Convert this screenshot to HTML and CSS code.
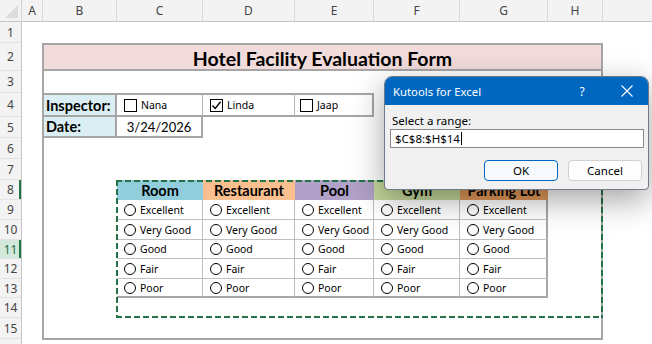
FILE: index.html
```html
<!DOCTYPE html>
<html lang="en">
<head>
  <meta charset="UTF-8" />
  <title>Hotel Facility Evaluation Form</title>
  <link rel="stylesheet" href="styles.css">
</head>
<body>
  <div class="app">
    <div class="colbar">
      <div class="corner"><span class="tri"></span></div>
      <div class="ch w-a">A</div>
      <div class="ch w-b">B</div>
      <div class="ch w-c">C</div>
      <div class="ch w-d">D</div>
      <div class="ch w-e">E</div>
      <div class="ch w-f">F</div>
      <div class="ch w-g">G</div>
      <div class="ch w-h">H</div>
      <div class="ch w-rest"></div>
    </div>

    <div class="main">
      <div class="rowbar">
        <div class="rh">1</div>
        <div class="rh">2</div>
        <div class="rh">3</div>
        <div class="rh">4</div>
        <div class="rh">5</div>
        <div class="rh">6</div>
        <div class="rh">7</div>
        <div class="rh mark">8</div>
        <div class="rh">9</div>
        <div class="rh">10</div>
        <div class="rh active">11</div>
        <div class="rh">12</div>
        <div class="rh">13</div>
        <div class="rh">14</div>
        <div class="rh">15</div>
        <div class="rh"></div>
      </div>

      <div class="sheet">
        <div class="frame"></div>
        <div class="title">Hotel Facility Evaluation Form</div>

        <div class="label insp-label">Inspector:</div>
        <div class="pick pick-c"><span class="box"></span>Nana</div>
        <div class="pick pick-d">
          <span class="box">
            <svg width="11" height="11" viewBox="0 0 11 11"><path d="M1.5 5.6 L4.2 8.4 L9.6 1.8" fill="none" stroke="#000" stroke-width="1.4"/></svg>
          </span>Linda
        </div>
        <div class="pick pick-e"><span class="box"></span>Jaap</div>

        <div class="label date-label">Date:</div>
        <div class="date-value">3/24/2026</div>

        <div class="rating">
          <div class="th room">Room</div>
          <div class="th restaurant">Restaurant</div>
          <div class="th pool">Pool</div>
          <div class="th gym">Gym</div>
          <div class="th parking">Parking Lot</div>

          <div class="td"><span class="radio"></span>Excellent</div>
          <div class="td"><span class="radio"></span>Excellent</div>
          <div class="td"><span class="radio"></span>Excellent</div>
          <div class="td"><span class="radio"></span>Excellent</div>
          <div class="td last"><span class="radio"></span>Excellent</div>

          <div class="td"><span class="radio"></span>Very Good</div>
          <div class="td"><span class="radio"></span>Very Good</div>
          <div class="td"><span class="radio"></span>Very Good</div>
          <div class="td"><span class="radio"></span>Very Good</div>
          <div class="td last"><span class="radio"></span>Very Good</div>

          <div class="td"><span class="radio"></span>Good</div>
          <div class="td"><span class="radio"></span>Good</div>
          <div class="td"><span class="radio"></span>Good</div>
          <div class="td"><span class="radio"></span>Good</div>
          <div class="td last"><span class="radio"></span>Good</div>

          <div class="td"><span class="radio"></span>Fair</div>
          <div class="td"><span class="radio"></span>Fair</div>
          <div class="td"><span class="radio"></span>Fair</div>
          <div class="td"><span class="radio"></span>Fair</div>
          <div class="td last"><span class="radio"></span>Fair</div>

          <div class="td bottom"><span class="radio"></span>Poor</div>
          <div class="td bottom"><span class="radio"></span>Poor</div>
          <div class="td bottom"><span class="radio"></span>Poor</div>
          <div class="td bottom"><span class="radio"></span>Poor</div>
          <div class="td bottom last"><span class="radio"></span>Poor</div>
        </div>

        <div class="selection"></div>
      </div>
    </div>

    <div class="dialog">
      <div class="dlg-title">
        <span class="dlg-name">Kutools for Excel</span>
        <span class="dlg-help">?</span>
        <span class="dlg-close">
          <svg width="12" height="12" viewBox="0 0 12 12"><path d="M0.5 0.5 L11.5 11.5 M11.5 0.5 L0.5 11.5" stroke="#fff" stroke-width="1.1"/></svg>
        </span>
      </div>
      <div class="dlg-body">
        <div class="dlg-label">Select a range:</div>
        <div class="dlg-input">$C$8:$H$14<span class="caret"></span></div>
        <div class="dlg-buttons">
          <button class="btn primary">OK</button>
          <button class="btn">Cancel</button>
        </div>
      </div>
    </div>
  </div>
</body>
</html>
```

FILE: styles.css
```css
body {
  margin: 0;
  background: #ffffff;
  font-family: 'Noto Sans', 'Open Sans', sans-serif;
  color: #000000;
}

.app {
  position: relative;
  width: 652px;
  height: 344px;
  overflow: hidden;
  background: #ffffff;
}

/* column letters */
.colbar {
  display: flex;
  height: 22px;
  background: #f3f3f3;
  border-bottom: 1px solid #c6c6c6;
  box-sizing: border-box;
}

.corner {
  width: 22px;
  position: relative;
  border-right: 1px solid #d4d4d4;
  box-sizing: border-box;
}

.tri {
  position: absolute;
  right: 3px;
  bottom: 3px;
  width: 0;
  height: 0;
  border-left: 13px solid transparent;
  border-bottom: 13px solid #dcdcdc;
}

.ch {
  box-sizing: border-box;
  border-right: 1px solid #d9d9d9;
  display: flex;
  justify-content: center;
  align-items: center;
  font-size: 12px;
  color: #444444;
}

.w-a { width: 21px; }
.w-b { width: 74px; }
.w-c { width: 86px; }
.w-d { width: 92px; }
.w-e { width: 79px; }
.w-f { width: 86px; }
.w-g { width: 88px; }
.w-h { width: 55px; }
.w-rest { flex: 1; border-right: none; }

.main {
  display: flex;
}

/* row numbers */
.rowbar {
  width: 22px;
  display: grid;
  grid-template-rows: 21px 28px 22px 24px 21px 21px 21px 20px 20px 20px 19px 20px 19px 20px 21px 20px;
  background: #f3f3f3;
  border-right: 1px solid #c6c6c6;
  box-sizing: border-box;
}

.rh {
  display: flex;
  align-items: center;
  justify-content: center;
  font-size: 12px;
  color: #444444;
  border-bottom: 1px solid #e2e2e2;
  box-sizing: border-box;
}

.rh.mark {
  box-shadow: inset -2px 0 0 #217346;
}

.rh.active {
  background: #d2e8da;
  color: #1d6b42;
  box-shadow: inset -2px 0 0 #217346;
}

/* worksheet body */
.sheet {
  flex: 1;
  display: grid;
  grid-template-columns: 21px 74px 86px 92px 79px 86px 88px 55px 1fr;
  grid-template-rows: 21px 28px 22px 24px 21px 21px 21px 20px 20px 20px 19px 20px 19px 20px 21px 20px;
}

.frame {
  grid-column: 2 / 9;
  grid-row: 2 / 16;
  border: 2px solid #a6a6a6;
  margin: 0 0 -1px -1px;
}

.title {
  grid-column: 2 / 9;
  grid-row: 2 / 3;
  margin-left: -1px;
  background: #f2dcdb;
  border: 2px solid #a6a6a6;
  display: flex;
  align-items: center;
  justify-content: center;
  font-family: Lato, 'Liberation Sans', sans-serif;
  font-weight: bold;
  font-size: 19.5px;
  padding-top: 2px;
}

.label {
  grid-column: 2 / 3;
  margin-left: -1px;
  background: #daeef3;
  border: 2px solid #a6a6a6;
  font-family: Lato, 'Liberation Sans', sans-serif;
  font-weight: bold;
  font-size: 14.5px;
  display: flex;
  align-items: flex-end;
  padding: 0 0 1px 2px;
}

.insp-label { grid-row: 4 / 5; }

.date-label {
  grid-row: 5 / 6;
  border-top: none;
}

.date-value {
  grid-column: 3 / 4;
  grid-row: 5 / 6;
  border: 2px solid #a6a6a6;
  border-top: none;
  border-left: none;
  font-family: Lato, 'Liberation Sans', sans-serif;
  font-size: 13px;
  display: flex;
  align-items: flex-end;
  justify-content: center;
  padding-bottom: 1px;
}

.pick {
  grid-row: 4 / 5;
  border-top: 2px solid #a6a6a6;
  border-bottom: 2px solid #a6a6a6;
  border-right: 1px solid #b4b4b4;
  display: flex;
  align-items: center;
  gap: 4px;
  padding-left: 6px;
  font-size: 10.5px;
}

.pick-c { grid-column: 3 / 4; padding-left: 7px; }
.pick-d { grid-column: 4 / 5; padding-left: 7px; }
.pick-e { grid-column: 5 / 6; padding-left: 5px; border-right: 2px solid #a6a6a6; }

.box {
  width: 13px;
  height: 13px;
  box-sizing: border-box;
  border: 1px solid #000000;
  display: flex;
  align-items: center;
  justify-content: center;
  background: #ffffff;
}

/* rating table */
.rating {
  grid-column: 3 / 8;
  grid-row: 8 / 14;
  display: grid;
  grid-template-columns: 86px 92px 79px 86px 88px;
  grid-template-rows: 20px 20px 20px 19px 20px 19px;
}

.th {
  display: flex;
  align-items: center;
  justify-content: center;
  font-family: Lato, 'Liberation Sans', sans-serif;
  font-weight: bold;
  font-size: 14.5px;
  padding-top: 1px;
}

.room { background: #92cddc; }
.restaurant { background: #fabf8f; }
.pool { background: #b1a0c7; }
.gym { background: #c4d79b; }
.parking { background: #e3995b; }

.td {
  display: flex;
  align-items: center;
  gap: 4px;
  padding-left: 7px;
  font-size: 10.5px;
  border-right: 1px solid #bfbfbf;
  border-bottom: 1px solid #bfbfbf;
}

.td.last { border-right: 2px solid #a6a6a6; }
.td.bottom { border-bottom: 2px solid #a6a6a6; }

.radio {
  width: 12px;
  height: 12px;
  box-sizing: border-box;
  border: 1px solid #000000;
  border-radius: 50%;
  background: #ffffff;
}

/* copy/select marquee */
.selection {
  grid-column: 3 / 9;
  grid-row: 8 / 15;
  margin-left: -1px;
  background:
    repeating-linear-gradient(90deg, #217346 0 6px, transparent 6px 9px) top / 100% 2px no-repeat,
    repeating-linear-gradient(90deg, #217346 0 6px, transparent 6px 9px) bottom / 100% 2px no-repeat,
    repeating-linear-gradient(180deg, #217346 0 6px, transparent 6px 9px) left / 2px 100% no-repeat,
    repeating-linear-gradient(180deg, #217346 0 6px, transparent 6px 9px) right / 2px 100% no-repeat;
}

/* kutools dialog */
.dialog {
  position: absolute;
  left: 384px;
  top: 76px;
  width: 265px;
  height: 114px;
  box-sizing: border-box;
  background: #f0f0f0;
  border: 1px solid #6f7b88;
  border-radius: 8px 8px 4px 4px;
  overflow: hidden;
  box-shadow: 0 10px 32px rgba(0, 0, 0, 0.36);
}

.dlg-title {
  height: 28px;
  background: #0067c0;
  color: #ffffff;
  display: flex;
  align-items: center;
  padding: 0 0 0 8px;
  font-size: 11.3px;
}

.dlg-name { flex: 1; }

.dlg-help {
  width: 16px;
  margin-right: 31px;
  text-align: center;
  font-size: 12px;
}

.dlg-close {
  display: flex;
  margin-right: 15px;
}

.dlg-body {
  padding: 7px 4px 0 5px;
  font-size: 11.5px;
}

.dlg-label {
  height: 17px;
  line-height: 17px;
  padding-left: 2px;
}

.dlg-input {
  height: 19px;
  box-sizing: border-box;
  background: #ffffff;
  border: 1px solid #8a8a8a;
  display: flex;
  align-items: center;
  padding-left: 4px;
  font-size: 11.5px;
}

.caret {
  width: 1px;
  height: 13px;
  background: #000000;
  margin-left: 1px;
}

.dlg-buttons {
  display: flex;
  justify-content: flex-end;
  gap: 10px;
  margin-top: 12px;
  padding-right: 2px;
}

.btn {
  width: 74px;
  height: 21px;
  font-family: 'Noto Sans', 'Open Sans', sans-serif;
  font-size: 11.5px;
  background: #fdfdfd;
  border: 1px solid #d0d0d0;
  border-radius: 4px;
  padding: 0;
  color: #000000;
}

.btn.primary {
  border: 1px solid #0067c0;
  background: #f6f9fd;
}
```
